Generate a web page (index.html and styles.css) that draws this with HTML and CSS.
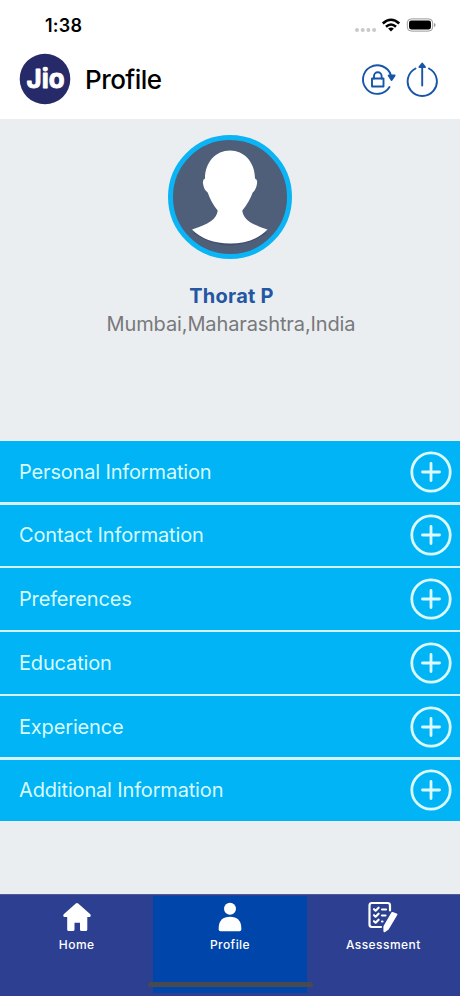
FILE: index.html
```html
<!DOCTYPE html>
<html lang="en">
<head>
<meta charset="utf-8">
<title>Profile</title>
<link rel="stylesheet" href="styles.css">
</head>
<body>
<div class="app">
  <div class="status">
    <span class="time">1:38</span>
    <svg class="signals" width="84" height="18" viewBox="0 0 84 18">
      <g fill="#c9c9c9"><circle cx="3" cy="13" r="2"/><circle cx="8.700" cy="13" r="2"/><circle cx="14.400" cy="13" r="2"/><circle cx="20.100" cy="13" r="2"/></g>
      <g fill="none" stroke="#000" stroke-width="2.600"><path d="M28.800 6.500Q37 -1 45.200 6.500"/><path d="M32 9.800Q37 5.200 42 9.800"/></g>
      <path d="M37 14.500L34.100 11.600Q37 9.500 39.900 11.600Z"/>
      <rect x="53.300" y="1.900" width="25.400" height="12.200" rx="4" fill="none" stroke="#999"/>
      <rect x="55" y="3.600" width="22" height="8.800" rx="2.300"/>
      <path d="M80 6q1.600.500 1.600 2T80 10z" fill="#999"/>
    </svg>
  </div>
  <header class="header">
    <svg class="logo" width="52" height="52" viewBox="0 0 52 52">
      <circle cx="26" cy="26" r="25.300" fill="#262a68"/>
      <text class="logo-text" x="26.600" y="34.700" text-anchor="middle" textLength="38" lengthAdjust="spacingAndGlyphs">Jio</text>
    </svg>
    <h1 class="title">Profile</h1>
    <svg class="actions" width="78" height="36" viewBox="0 0 78 36" fill="none" stroke="#1755a8" stroke-width="1.900" stroke-linecap="round" stroke-linejoin="round">
      <path d="M31 14.500A14.300 14.300 0 1 0 29.500 26"/>
      <path d="M28.700 14.500H34.600L31.600 19z" fill="#1755a8"/>
      <rect x="12" y="17.500" width="11.500" height="8"/><path d="M14 17.500V15a3.800 3.800 0 0 1 7.600 0V17.500"/>
      <path d="M55.500 7.500A14.600 14.600 0 1 0 69 7.500M62.200 24.500V5"/>
      <path d="M59.400 6L62.200 2.500L65 6z" fill="#1755a8"/>
    </svg>
  </header>
  <main class="main">
    <section class="person">
      <svg class="avatar" width="124" height="124" viewBox="0 0 124 124">
        <circle cx="62" cy="62" r="59.500" fill="#4f5e79" stroke="#0bb4f5" stroke-width="5"/>
        <path d="M26 97.500Q44 109.500 62 109.500T98 97.500" fill="none" stroke="#43506a" stroke-width="2"/>
        <path d="M62 15.500C76 15.500 87 27 87 43.500Q89.800 44.500 89 48.500C88.500 53 86.500 56 84.700 57.500C82.500 64 78.500 70.500 74.300 75.500C75 84 83 89.500 99.500 94.500C91 103.500 78 108.500 62 108.500S33 103.500 24 94.500C40.500 89.500 49 84 49.700 75.500C45.500 70.500 41.800 64 39.700 57.500C37.500 56 35.500 53 35 48.500Q34.500 44.500 37 43.500C37 27 48 15.500 62 15.500Z" fill="#fff"/>
      </svg>
      <h2 class="name">Thorat P</h2>
      <p class="place">Mumbai,Maharashtra,India</p>
    </section>
    <ul class="sections">
      <li class="row"><span>Personal Information</span><svg class="plus" viewBox="0 0 42 42"><circle cx="21" cy="21" r="19.200"/><path d="M21 12.500v17M12.500 21h17"/></svg></li>
      <li class="row"><span>Contact Information</span><svg class="plus" viewBox="0 0 42 42"><circle cx="21" cy="21" r="19.200"/><path d="M21 12.500v17M12.500 21h17"/></svg></li>
      <li class="row"><span>Preferences</span><svg class="plus" viewBox="0 0 42 42"><circle cx="21" cy="21" r="19.200"/><path d="M21 12.500v17M12.500 21h17"/></svg></li>
      <li class="row"><span>Education</span><svg class="plus" viewBox="0 0 42 42"><circle cx="21" cy="21" r="19.200"/><path d="M21 12.500v17M12.500 21h17"/></svg></li>
      <li class="row"><span>Experience</span><svg class="plus" viewBox="0 0 42 42"><circle cx="21" cy="21" r="19.200"/><path d="M21 12.500v17M12.500 21h17"/></svg></li>
      <li class="row"><span>Additional Information</span><svg class="plus" viewBox="0 0 42 42"><circle cx="21" cy="21" r="19.200"/><path d="M21 12.500v17M12.500 21h17"/></svg></li>
    </ul>
  </main>
  <nav class="tabs">
    <a class="tab">
      <svg width="32" height="32" viewBox="0 0 32 32" fill="#fff"><path d="M14.800 2.500Q16 1.500 17.200 2.500L29.300 13.200Q30.500 15.500 28.500 16H26.300V28.500Q26.300 30 24.800 30H20.500Q19 30 19 28.500V21.800H13.500V28.500Q13.500 30 12 30H7.700Q6.200 30 6.200 28.500V16H3.500Q1.500 15.500 2.700 13.200Z"/></svg>
      <span>Home</span>
    </a>
    <a class="tab active">
      <svg width="32" height="32" viewBox="0 0 32 32" fill="#fff"><circle cx="16" cy="7.700" r="6"/><path d="M4.700 27C4.700 19.500 9 15.700 16 15.700S27.300 19.500 27.300 27V28.500Q27.300 30.300 25.500 30.300H6.500Q4.700 30.300 4.700 28.500Z"/></svg>
      <span>Profile</span>
    </a>
    <a class="tab">
      <svg width="32" height="32" viewBox="0 0 32 32" fill="none" stroke="#fff" stroke-width="2.200" stroke-linecap="round" stroke-linejoin="round">
        <path d="M23 9.500V4.500Q23 2 20.500 2H5Q2.500 2 2.500 4.500V23.500Q2.500 26 5 26H14"/>
        <path d="M7 8.200l1.600 1.500 3-3M7 14.200l1.600 1.500 3-3M7 20.200l1.600 1.500 3-3M15 8.500h4M15 14.500h3.500M15 20.500h.500"/>
        <path d="M25.300 12L29.300 13.500L21 27.500L17.500 30L17.500 25.500Z" fill="#fff"/>
      </svg>
      <span>Assessment</span>
    </a>
    <div class="home-bar"></div>
  </nav>
</div>
</body>
</html>
```
FILE: styles.css
```css
* { box-sizing: border-box; }
body { margin: 0; font-family: Inter, "Liberation Sans", sans-serif; }
h1, h2, p, ul { margin: 0; padding: 0; }
svg { display: block; flex: none; }
.app { width: 460px; height: 996px; display: flex; flex-direction: column; background: #ebeef0; overflow: hidden; }
.status { height: 50px; flex: none; background: #fff; display: flex; justify-content: space-between; padding: 15px 22px 0 45px; }
.time { font-size: 18px; line-height: 22px; font-weight: 600; letter-spacing: .2px; }
.signals { margin-top: 2px; }
.header { height: 69px; flex: none; background: #fff; display: flex; align-items: flex-start; padding: 3px 22px 0 19px; }
.logo-text { font-family: Inter, sans-serif; font-size: 26px; font-weight: 700; fill: #fff; stroke: #fff; stroke-width: .9px; stroke-linejoin: round; }
.title { margin: 10px 0 0 14px; font-size: 26px; line-height: 34px; font-weight: 500; letter-spacing: -.55px; }
.actions { margin: 8px 0 0 auto; }
.main { height: 775px; flex: none; }
.person { height: 322px; padding-top: 16px; display: flex; flex-direction: column; align-items: center; }
.name { margin-top: 24px; padding-left: 3px; font-size: 20px; line-height: 26px; font-weight: 700; letter-spacing: .25px; color: #2457a3; }
.place { margin-top: 2px; padding-left: 2px; font-size: 20px; line-height: 26px; letter-spacing: -.12px; color: #77797c; font-weight: 400; white-space: nowrap; }
.sections { list-style: none; display: flex; flex-direction: column; gap: 2.3px; height: 380px; background: #d4f1f8; }
.row { flex: 1; background: #00b4f5; color: #d9fbff; display: flex; align-items: center; justify-content: space-between; padding: 0 8px 0 19px; font-size: 20px; font-weight: 400; letter-spacing: -.16px; }
.plus { width: 42px; height: 42px; fill: none; stroke: #dcfbff; stroke-width: 2.8px; stroke-linecap: round; }
.tabs { position: relative; height: 102px; flex: none; background: #2c3f91; border-top: 1px solid #505b98; display: flex; padding: 1px 0 3px; }
.tab { flex: 1; display: flex; flex-direction: column; align-items: center; gap: 4px; padding-top: 5px; color: #fff; font-size: 12px; line-height: 16px; font-weight: 500; letter-spacing: .45px; }
.active { background: #0046aa; }
.home-bar { position: absolute; left: 148px; bottom: 9px; width: 165px; height: 5px; border-radius: 3px; background: #494a50; }
```
